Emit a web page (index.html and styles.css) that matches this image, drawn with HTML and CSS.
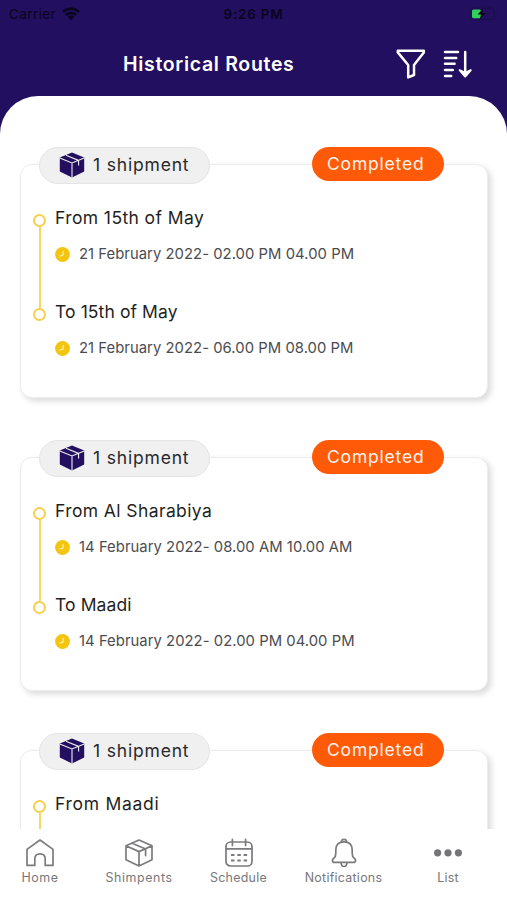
FILE: index.html
```
<!DOCTYPE html>
<html lang="en">
<head>
<meta charset="utf-8">
<title>Historical Routes</title>
<link rel="stylesheet" href="styles.css">
</head>
<body>
<svg class="defs" aria-hidden="true">
  <symbol id="box" viewBox="0 0 26 26">
    <path fill="#220f5f" d="M13 .6 25.2 5.6V19.6L13 25.4.8 19.6V5.6Z"/>
    <path fill="none" stroke="#f0f0f0" stroke-width="1.1" d="M.8 6 13 11 25.2 6M13 11V25.4M7 3.2 19.6 8.4V13.6"/>
  </symbol>
  <symbol id="clock" viewBox="0 0 15 15">
    <circle cx="7.5" cy="7.5" r="7.4" fill="#f3c50f"/>
    <path fill="none" stroke="#fff3b8" stroke-width="1.1" stroke-linecap="round" d="M8.1 4.2V8L4.9 9"/>
  </symbol>
</svg>
<div class="app">
  <header class="header">
    <div class="status">
      <div class="carrier">Carrier
        <svg width="18" height="14" viewBox="0 0 18 14"><g fill="none" stroke="#09051c" stroke-width="2.4"><path d="M1 4.8Q9-1.8 17 4.8M3.8 8Q9 3.8 14.2 8"/></g><path fill="#09051c" d="M5.8 9.8Q9 7.2 12.2 9.8L9 13.2Z"/></svg>
      </div>
      <div class="time">9:26 PM</div>
      <svg class="battery" width="28" height="14" viewBox="0 0 28 14"><rect x=".5" y="1" width="24" height="11.5" rx="3.5" fill="none" stroke="#1b0d49"/><path d="M26 5v4q1.5-2 0-4" fill="#1b0d49"/><rect x="2" y="2.6" width="9" height="8.6" rx="1.6" fill="#35cf5c"/><path d="M13.2 1.6 7.6 7.6H11L9.8 12.2 15.8 6H12.2Z" fill="#09051c"/></svg>
    </div>
    <div class="titlebar">
      <h1>Historical Routes</h1>
      <div class="actions">
        <svg width="30" height="30" viewBox="0 0 30 30"><path fill="none" stroke="#fff" stroke-width="2.5" stroke-linejoin="round" d="M1.8 1.8H27.8V3.4L18 16V26L12.2 28.4V16L1.8 3.4Z"/></svg>
        <svg width="30" height="30" viewBox="0 0 30 30"><path fill="none" stroke="#fff" stroke-width="2.5" stroke-linecap="round" d="M2 3H15M2 9H13.2M2 14.8H11.6M2 21H9.8M2 27H8.2M22.2 3V26"/><path fill="#fff" stroke="#fff" stroke-width="2" stroke-linejoin="round" d="M16.6 21.2 22.2 24 27.8 21.2 22.2 27.6Z"/></svg>
      </div>
    </div>
  </header>
  <main class="sheet">
    <article class="card">
      <div class="tags"><span class="count"><svg width="26" height="26"><use href="#box"/></svg>1 shipment</span><span class="state">Completed</span></div>
      <ul class="route">
        <li class="stop"><h2>From 15th of May</h2><p><svg width="15" height="15"><use href="#clock"/></svg>21 February 2022- 02.00 PM 04.00 PM</p></li>
        <li class="stop"><h2 class="tight">To 15th of May</h2><p><svg width="15" height="15"><use href="#clock"/></svg>21 February 2022- 06.00 PM 08.00 PM</p></li>
      </ul>
    </article>
    <article class="card">
      <div class="tags"><span class="count"><svg width="26" height="26"><use href="#box"/></svg>1 shipment</span><span class="state">Completed</span></div>
      <ul class="route">
        <li class="stop"><h2>From Al Sharabiya</h2><p><svg width="15" height="15"><use href="#clock"/></svg>14 February 2022- 08.00 AM 10.00 AM</p></li>
        <li class="stop"><h2 class="tight">To Maadi</h2><p><svg width="15" height="15"><use href="#clock"/></svg>14 February 2022- 02.00 PM 04.00 PM</p></li>
      </ul>
    </article>
    <article class="card">
      <div class="tags"><span class="count"><svg width="26" height="26"><use href="#box"/></svg>1 shipment</span><span class="state">Completed</span></div>
      <ul class="route">
        <li class="stop"><h2 class="loose">From Maadi</h2></li>
        <li class="stop"></li>
      </ul>
    </article>
  </main>
  <nav class="tabs">
    <a class="tab"><svg viewBox="0 0 30 30"><path d="M2 27.4V11.4L15 2 28 11.4V27.4H20.2V21Q20.2 15.8 15 15.8T9.8 21V27.4Z"/></svg><span class="wide">Home</span></a>
    <a class="tab"><svg viewBox="0 0 30 30"><path d="M15 2 28 7.8V21.8L15 28 2 21.8V7.8ZM2 7.8 15 13.6 28 7.8M15 13.6V28M8.2 5.2 21.6 11V17.6"/></svg><span class="wide">Shimpents</span></a>
    <a class="tab"><svg viewBox="0 0 30 30"><rect x="2" y="4" width="26" height="24" rx="4.5"/><path d="M2 10.8H28M8.4 1.4V7.4M21.6 1.4V7.4"/><path class="dash" d="M7 17H10.5M13.3 17H16.8M19.6 17H23.1M7 22.6H10.5M13.3 22.6H16.8M19.6 22.6H23.1"/></svg><span>Schedule</span></a>
    <a class="tab"><svg viewBox="0 0 30 30"><path d="M12.4 4.3Q12.2 1.4 15 1.4T17.6 4.3M12 24.3Q12.2 28.5 15 28.5T18 24.3M4.2 24.3Q2.4 22 4.8 20.2 6.8 18.8 6.8 15.5V12Q6.8 3.9 15 3.9T23.2 12V15.5Q23.2 18.8 25.2 20.2 27.6 22 25.8 24.3Z"/></svg><span>Notifications</span></a>
    <a class="tab"><svg viewBox="0 0 30 30"><g class="dots"><circle cx="4.6" cy="14.8" r="3.6"/><circle cx="15" cy="14.8" r="3.6"/><circle cx="25.4" cy="14.8" r="3.6"/></g></svg><span>List</span></a>
  </nav>
</div>
</body>
</html>
```
FILE: styles.css
```
*, *::before, *::after { box-sizing: border-box; }
body { margin: 0; font-family: Inter, "Liberation Sans", sans-serif; background: #fff; }
h1, h2, p, ul { margin: 0; padding: 0; }
svg { display: block; flex: none; }
.defs { position: absolute; width: 0; height: 0; }

.app { height: 900px; display: flex; flex-direction: column; overflow: hidden; background: #220f5f; }
.header { flex: none; height: 96px; color: #fff; }
.status {
  height: 28px; padding: 0 9px;
  display: grid; grid-template-columns: 1fr auto 1fr; align-items: center;
  font-size: 13.5px; line-height: 28px; color: #09051c;
}
.carrier { display: flex; align-items: center; gap: 6px; letter-spacing: .4px; }
.time { font-weight: 600; letter-spacing: .75px; }
.battery { justify-self: end; }
.titlebar { height: 68px; padding-left: 123px; padding-right: 34px; display: flex; align-items: flex-start; justify-content: space-between; }
h1 { font-size: 19.5px; line-height: 24px; margin-top: 24px; font-weight: 600; letter-spacing: .68px; white-space: nowrap; }
.actions { display: flex; gap: 17px; margin-top: 21px; }

.sheet {
  flex: 1; min-height: 0; overflow: hidden;
  padding: 68px 19px 0 20px;
  display: flex; flex-direction: column; gap: 59px;
  background: #fff; border-radius: 38px 38px 0 0;
}
.card {
  flex: none; height: 234px; padding: 0 12px;
  border: 1px solid #ededed; border-radius: 12px; background: #fff;
  box-shadow: 3px 3px 6px rgba(0, 0, 0, .15);
}
.tags { display: flex; align-items: flex-start; justify-content: space-between; margin: -18px 31px 0 6px; }
.count {
  display: flex; align-items: center; gap: 8px;
  width: 171px; height: 37px; padding: 0 0 2px 19px;
  border: 1px solid #e3e5e6; border-radius: 19px; background: #f0f0f0;
  font-size: 17.5px; font-weight: 400; letter-spacing: .82px; color: #29292c;
}
.state {
  width: 132px; height: 34px; padding-left: 15px; border-radius: 17px;
  background: #ff5a08; color: #fff1e8;
  font-size: 17.5px; font-weight: 400; line-height: 34px; letter-spacing: .8px;
}
.route { list-style: none; padding-top: 22px; }
.stop { height: 94px; padding-left: 22px; position: relative; }
.stop::before {
  content: ""; position: absolute; left: 0; top: 8px;
  width: 13px; height: 13px; border: 2px solid #f6d04c; border-radius: 50%;
}
.stop:first-child::after {
  content: ""; position: absolute; left: 5.5px; top: 21px;
  width: 2px; height: 81px; background: #f8d661;
}
h2 { font-size: 17.5px; line-height: 24px; font-weight: 400; letter-spacing: .4px; color: #1f1f22; }
.tight { letter-spacing: .1px; }
.loose { letter-spacing: .72px; }
.stop p { display: flex; align-items: center; gap: 9px; margin-top: 14px; font-size: 14.8px; line-height: 20px; letter-spacing: .05px; color: #4c4c50; white-space: nowrap; }

.tabs { flex: none; height: 71px; padding-top: 9px; display: grid; grid-template-columns: 80px 118px 81px 129px 80px; align-items: start; background: #fff; }
.tab { display: flex; flex-direction: column; align-items: center; gap: 2px; color: #77777a; font-size: 12.4px; line-height: 16px; letter-spacing: .28px; }
.tab svg { width: 30px; height: 30px; fill: none; stroke: #7b7b7d; stroke-width: 1.7; stroke-linejoin: round; stroke-linecap: round; }
.tab .dash { stroke-width: 2; stroke-linecap: butt; }
.tab .dots { fill: #747476; stroke: none; }
.wide { letter-spacing: .6px; }
```
